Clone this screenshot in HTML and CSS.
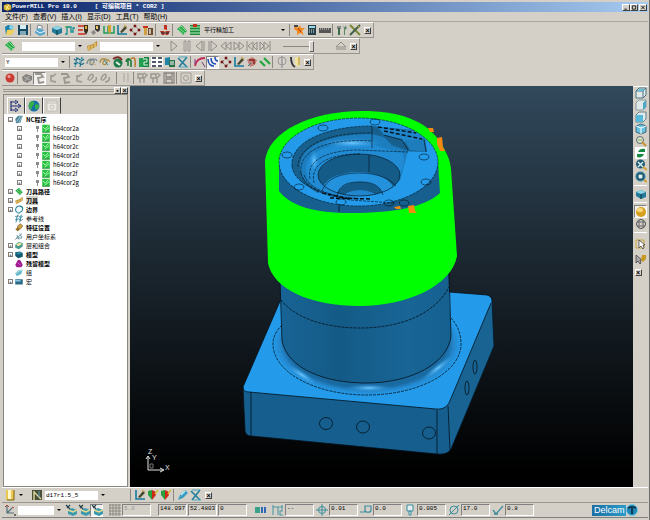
FILE: index.html
```html
<!DOCTYPE html>
<html lang="zh-CN">
<head>
    <meta charset="UTF-8">
    <meta name="viewport" content="width=device-width, initial-scale=1.0">
    <title>PowerMILL Pro 10.0</title>
    <link rel="stylesheet" href="styles.css">
</head>
<body>
    <!-- icon sprite -->
    <svg class="sprite" aria-hidden="true">
        <symbol id="open" viewBox="0 0 12 12"><path d="M1 3l3-2 5 1v8l-7 1z" fill="#1b7fa8"/><path d="M3 6l8-1-3 6-6 0z" fill="#f0d060"/><path d="M6 1l4 2-2 3-3-2z" fill="#7fd4f0"/></symbol>
        <symbol id="save" viewBox="0 0 12 12"><path d="M1 1h10v10H1z" fill="#174a62"/><path d="M3 1h6v4H3z" fill="#d8eef5"/><path d="M3 7h6v4H3z" fill="#7fa8b8"/></symbol>
        <symbol id="print" viewBox="0 0 12 12"><path d="M4 1l4 1v4l-5-1z" fill="#fff" stroke="#345" stroke-width=".6"/><path d="M1 6l5-2 5 3v3l-5 2-5-3z" fill="#5aa5cc"/><path d="M1 6l5 3 5-2" fill="none" stroke="#e8f8ff"/></symbol>
        <symbol id="block" viewBox="0 0 12 12"><path d="M1 4l5-2 5 2v5l-5 2-5-3z" fill="#267a99"/><path d="M1 4l5-2 5 2-5 2z" fill="#8fd6e6"/><path d="M6 6v5" stroke="#0b3a4d"/></symbol>
        <symbol id="rapid" viewBox="0 0 12 12"><path d="M1 10h2V3h4v5h2V4h2" fill="none" stroke="#149090" stroke-width="1.3"/><path d="M1 3h4" stroke="#2a9a4a"/></symbol>
        <symbol id="feeds" viewBox="0 0 12 12"><path d="M1 2h6M1 6h5M1 10h7" stroke="#d02818" stroke-width="1.6"/><path d="M7 1h4v6l-2 4-2-4z" fill="#3a2a1a"/><path d="M8 2h2v3H8z" fill="#e0b040"/></symbol>
        <symbol id="tool" viewBox="0 0 12 12"><path d="M5 1h5v5l-2 2-3-2z" fill="#3a3a3a"/><path d="M6 2h2v3H6z" fill="#e8c860"/><path d="M1 8l3-2 2 3-3 2z" fill="#888"/></symbol>
        <symbol id="leads" viewBox="0 0 12 12"><path d="M1 2v7h4V2M7 2v7h4V2" fill="none" stroke="#1f9c58" stroke-width="1.5"/><path d="M5 1h3v6l-1 3-2-3z" fill="#d8a030"/></symbol>
        <symbol id="axis" viewBox="0 0 12 12"><path d="M2 1v9h9" fill="none" stroke="#167aa0" stroke-width="1.6"/><path d="M4 8l5-6 2 2-5 5z" fill="#4a4a30"/><path d="M8 1l3 2" stroke="#d0a030"/></symbol>
        <symbol id="points" viewBox="0 0 12 12"><path d="M2 6l4-4 4 4-4 4z" fill="none" stroke="#555" stroke-dasharray="1 1"/><path d="M5 1h2v2H5zM1 5h2v2H1zM9 5h2v2H9zM5 9h2v2H5z" fill="#7b1515" stroke="#7b1515" stroke-width=".6"/></symbol>
        <symbol id="holder" viewBox="0 0 12 12"><path d="M1 2h5v2H1z" fill="#c83018"/><path d="M2 4h3v7H2z" fill="#d0a040"/><path d="M6 4h5v7H6z" fill="#6c4830"/><path d="M7 5h2v5H7z" fill="#c8c0a8"/></symbol>
        <symbol id="drill" viewBox="0 0 12 12"><path d="M5 1h3v5H5z" fill="#c03020"/><path d="M1 7h10l-2 4H3z" fill="#b03428"/><path d="M6 5v6" stroke="#f0e0c0"/><path d="M2 9h8" stroke="#303030"/></symbol>
        <symbol id="path" viewBox="0 0 12 12"><path d="M1 5l5-4 5 6-4 4z" fill="#27a844"/><path d="M3 4l6 5M5 2l5 5M2 6l5 4" stroke="#b8f5c4" stroke-width=".7"/></symbol>
        <symbol id="strategy" viewBox="0 0 12 12"><path d="M1 1h10v10H1z" fill="#1d8a3c"/><path d="M1 3h10M1 6h10M1 9h10" stroke="#b8f0c0"/><path d="M4 0h4v3H4z" fill="#c83020"/></symbol>
        <symbol id="logo" viewBox="0 0 12 12"><path d="M1 3l5-2 5 2v6l-5 2-5-2z" fill="#d8b030"/><path d="M3 4l5 4M8 2l-4 7" stroke="#fff4a8" stroke-width="1.3"/><path d="M1 9l5 2 5-2" fill="none" stroke="#20304a"/></symbol>
        <symbol id="star" viewBox="0 0 12 12"><path d="M2 2l3 2 2-3 1 3 4 0-3 3 2 4-4-2-3 2 0-4-3-2z" fill="#f08a20"/><path d="M1 1h4v2H1z" fill="#444"/><path d="M5 4l3 4" stroke="#a03010"/></symbol>
        <symbol id="calc" viewBox="0 0 12 12"><path d="M2 1h8v10H2z" fill="#26404a"/><path d="M3 2h6v2H3z" fill="#9ad8e8"/><path d="M3 6h6M3 8h6" stroke="#d8e8e8" stroke-dasharray="1 1"/></symbol>
        <symbol id="ruler" viewBox="0 0 12 12"><path d="M0 4h12v5H0z" fill="#555"/><path d="M1 5h10" stroke="#ddd" stroke-dasharray="1 1"/></symbol>
        <symbol id="tools" viewBox="0 0 12 12"><path d="M1 2h4v3H1z" fill="#888"/><path d="M3 4v7" stroke="#3f6a4a" stroke-width="2"/><path d="M7 1c-1 3 3 3 2 0l2 3-2 2v5H8V5z" fill="#5c8a66"/></symbol>
        <symbol id="cross" viewBox="0 0 12 12"><path d="M1 1l10 10" stroke="#7a8a30" stroke-width="2"/><path d="M11 1L1 11" stroke="#44604a" stroke-width="2"/><path d="M8 1l3 3" stroke="#d8c040"/></symbol>
        <symbol id="mill" viewBox="0 0 12 12"><path d="M1 6l6-2 4-3v5l-5 3-4 2z" fill="#c09030"/><path d="M3 6v4M6 5v4M9 3v4" stroke="#fff0b0" stroke-width=".8"/></symbol>
        <symbol id="play" viewBox="0 0 12 12"><path d="M3 1l6 5-6 5z" fill="none" stroke="#8f8c86"/></symbol>
        <symbol id="pause" viewBox="0 0 12 12"><path d="M3 1h2v10H3zM7 1h2v10H7z" fill="none" stroke="#8f8c86" stroke-width=".8"/></symbol>
        <symbol id="stepback" viewBox="0 0 12 12"><path d="M8 1L2 6l6 5zM10 1v10" fill="none" stroke="#8f8c86"/></symbol>
        <symbol id="stepfwd" viewBox="0 0 12 12"><path d="M4 1l6 5-6 5zM2 1v10" fill="none" stroke="#8f8c86"/></symbol>
        <symbol id="rewind" viewBox="0 0 12 12"><path d="M6 2L1 6l5 4zM11 2L6 6l5 4z" fill="none" stroke="#8f8c86"/></symbol>
        <symbol id="forward" viewBox="0 0 12 12"><path d="M1 2l5 4-5 4zM6 2l5 4-5 4z" fill="none" stroke="#8f8c86"/></symbol>
        <symbol id="first" viewBox="0 0 12 12"><path d="M1 1v10M7 2L2 6l5 4zM11 2L7 6l4 4z" fill="none" stroke="#8f8c86"/></symbol>
        <symbol id="last" viewBox="0 0 12 12"><path d="M11 1v10M1 2l4 4-4 4zM5 2l5 4-5 4z" fill="none" stroke="#8f8c86"/></symbol>
        <symbol id="eject" viewBox="0 0 12 12"><path d="M6 2l5 5H1zM1 9h10" fill="none" stroke="#8f8c86"/></symbol>
        <symbol id="curve" viewBox="0 0 12 12"><path d="M1 3c3 3 3-2 5 0s3 2 5 0M1 7c3 3 3-2 5 0s3 2 5 0M4 1L2 11M9 1L7 11" fill="none" stroke="#1c7088" stroke-width="1.1"/><path d="M2 10l8-8" stroke="#6cc0d0"/></symbol>
        <symbol id="swirl" viewBox="0 0 12 12"><path d="M1 8c0-6 8-6 7-2s-5 3-4 0 6-4 7-1" fill="none" stroke="#7b8c90" stroke-width="1.3"/><path d="M2 5l8 4" stroke="#c8b080"/></symbol>
        <symbol id="swirl2" viewBox="0 0 12 12"><path d="M1 7c0-6 8-5 7-1s-5 3-4 0 5-4 7 0" fill="none" stroke="#b09048" stroke-width="1.3"/><path d="M5 4l4 5" stroke="#2a90a0"/></symbol>
        <symbol id="gauge" viewBox="0 0 12 12"><circle cx="6" cy="7" r="4.500" fill="#1f7a4a"/><path d="M1 3c4-3 7-2 9 1" fill="none" stroke="#803028" stroke-width="2"/><path d="M4 6l4 3" stroke="#e0f0e0" stroke-width="2"/></symbol>
        <symbol id="arch" viewBox="0 0 12 12"><path d="M1 6c1-4 3-4 5-1l0 6M3 3v7" fill="none" stroke="#1f7a38" stroke-width="1.6"/><path d="M6 3c3-3 5-1 4 8" fill="none" stroke="#b88030" stroke-width="1.6"/></symbol>
        <symbol id="sheet" viewBox="0 0 12 12"><path d="M1 2h6v9H1z" fill="#22a050"/><path d="M6 1h5v10H6z" fill="#1a8040"/><path d="M5 3h4v3H6v3h4" stroke="#d8ffe0" fill="none"/></symbol>
        <symbol id="list" viewBox="0 0 12 12"><path d="M0 1h12v10H0z" fill="#fff"/><path d="M1 2h4M7 2h4M1 6h4M7 6h4M1 10h4M7 10h4" stroke="#1b2438" stroke-width="1.6"/></symbol>
        <symbol id="copy" viewBox="0 0 12 12"><path d="M1 2l5-1v8H1z" fill="#1f86a8"/><path d="M5 4h6v7H5z" fill="#2a7048"/><path d="M6 6h4M6 8h4" stroke="#fff"/></symbol>
        <symbol id="delete" viewBox="0 0 12 12"><path d="M1 2l9 9M10 1L2 11" stroke="#22809c" stroke-width="1.6"/><path d="M2 1h8M3 11h8" stroke="#4aa8c0"/></symbol>
        <symbol id="arc" viewBox="0 0 12 12"><path d="M1 10C2 4 6 2 11 2" fill="none" stroke="#c02858" stroke-width="1.8"/><path d="M1 3v5M8 6l3 5" stroke="#803880"/></symbol>
        <symbol id="waves" viewBox="0 0 12 12"><path d="M1 3c0 5 3 7 6 7M4 2c0 4 2 6 5 6M8 1c0 3 1 4 3 4" fill="none" stroke="#1a4ab8" stroke-width="1.5"/></symbol>
        <symbol id="redpath" viewBox="0 0 12 12"><path d="M1 4l5-3 5 3-2 5-5 2z" fill="#c08078"/><path d="M3 4h5v4" fill="none" stroke="#8a2020" stroke-width="1.4"/><path d="M2 10l3-3" stroke="#2a8080"/></symbol>
        <symbol id="hatch" viewBox="0 0 12 12"><path d="M1 5l5 5M5 2l6 6" stroke="#20a840" stroke-width="2.200"/></symbol>
        <symbol id="phi" viewBox="0 0 12 12"><circle cx="6" cy="5" r="4" fill="none" stroke="#999"/><path d="M6 0v12" stroke="#999" stroke-width="1.4"/></symbol>
        <symbol id="cutter" viewBox="0 0 12 12"><path d="M2 1c0 6 2 9 4 10" fill="none" stroke="#333" stroke-width="1.8"/><path d="M6 1h5v7l-2 3-3-3z" fill="#f0e4a0"/><path d="M10 1v8" stroke="#b08828"/></symbol>
        <symbol id="record" viewBox="0 0 12 12"><circle cx="6" cy="6" r="4.500" fill="#c83c34"/><circle cx="5" cy="4.500" r="1.500" fill="#f0a098"/></symbol>
        <symbol id="gsolid" viewBox="0 0 12 12"><path d="M1 5l4-3 6 2v4l-5 3-4-2z" fill="#858280"/><path d="M3 5l6 3M8 4L4 9" stroke="#bbb"/></symbol>
        <symbol id="gcurl" viewBox="0 0 12 12"><path d="M1 2l6 0 2 3-5 1 1 5 5-1" fill="none" stroke="#9a9790" stroke-width="1.8"/></symbol>
        <symbol id="gleft" viewBox="0 0 12 12"><path d="M9 2L4 5l0 4 5 1M3 4l4 0" fill="none" stroke="#a3a099" stroke-width="1.8"/></symbol>
        <symbol id="gloop" viewBox="0 0 12 12"><path d="M2 8c0-4 4-7 5-5s-3 6-4 5M6 10c4 0 5-3 4-5" fill="none" stroke="#9a9790" stroke-width="1.5"/></symbol>
        <symbol id="gbars" viewBox="0 0 12 12"><path d="M4 1v9M8 1v9M10 10h1" stroke="#aaa7a0"/></symbol>
        <symbol id="gtools" viewBox="0 0 12 12"><path d="M1 2h5v4H1zM7 1l3 2-3 3v5M3 6v5" fill="none" stroke="#9a9790" stroke-width="1.4"/></symbol>
        <symbol id="gsave" viewBox="0 0 12 12"><path d="M1 1h10v10H1zM3 1v4h6V1M3 11V7h6v4" fill="none" stroke="#8a8780" stroke-width="1.3"/></symbol>
        <symbol id="gview" viewBox="0 0 12 12"><path d="M1 1h10v10H1z" fill="none" stroke="#a09d96"/><circle cx="6" cy="6" r="2.500" fill="none" stroke="#a09d96"/></symbol>
        <symbol id="cubew" viewBox="0 0 12 12"><path d="M1 4l3-3h7v7l-3 3H1z" fill="#dfe9ea" stroke="#4d7380"/><path d="M1 4h7v7M8 4l3-3" fill="none" stroke="#4d7380"/><path d="M2 4l2-2h6L8 4z" fill="#65bfd8"/></symbol>
        <symbol id="cuber" viewBox="0 0 12 12"><path d="M1 4l3-3h7v7l-3 3H1z" fill="#dfe9ea" stroke="#8a9ba0"/><path d="M8 4l3-3v7l-3 3z" fill="#49a9c8"/></symbol>
        <symbol id="cubef" viewBox="0 0 12 12"><path d="M1 4l3-3h7v7l-3 3H1z" fill="#dfe9ea" stroke="#66808a"/><path d="M1 4h7v7H1z" fill="#57b9d9"/></symbol>
        <symbol id="iso" viewBox="0 0 12 12"><path d="M1 3l5-2 5 2v6l-5 2-5-2z" fill="#68c0dc" stroke="#20506a" stroke-width=".8"/><path d="M1 3l5 2 5-2M6 5v6" fill="none" stroke="#fff"/></symbol>
        <symbol id="zoom" viewBox="0 0 12 12"><circle cx="5" cy="5" r="3.500" fill="#cfe6d8" stroke="#666"/><path d="M7 7l4 4" stroke="#c89030" stroke-width="2"/><path d="M3 5h4" stroke="#a0a030"/></symbol>
        <symbol id="refresh" viewBox="0 0 12 12"><path d="M0 0h12v12H0z" fill="#fff"/><path d="M3 5c1-3 4-4 7-3v3H6zM9 7c-1 3-4 4-7 3V7h4z" fill="#168c40"/></symbol>
        <symbol id="zoomx" viewBox="0 0 12 12"><circle cx="5.500" cy="5" r="4.500" fill="#235a70"/><path d="M3 3l5 5M8 3L3 8" stroke="#d4f2fa" stroke-width="1.4"/><path d="M8 8l4 3" stroke="#d0a030" stroke-width="2"/></symbol>
        <symbol id="zoombox" viewBox="0 0 12 12"><circle cx="5.500" cy="5.500" r="5" fill="#2f7f98"/><path d="M3 3h5v5H3z" fill="#d8f4fa" stroke="#103040"/><path d="M9 9l3 2" stroke="#d0a030" stroke-width="2"/></symbol>
        <symbol id="shade" viewBox="0 0 12 12"><circle cx="6" cy="6" r="5" fill="#d8a020"/><ellipse cx="5" cy="4" rx="3" ry="2" fill="#f8dc80"/></symbol>
        <symbol id="wire" viewBox="0 0 12 12"><circle cx="6" cy="6" r="4.500" fill="none" stroke="#555"/><path d="M2 4h8M2 8h8M4 2v8M8 2v8" stroke="#666"/></symbol>
        <symbol id="select" viewBox="0 0 12 12"><path d="M1 2h8v8H1z" fill="none" stroke="#c8a840"/><path d="M4 2v8l2-2 2 3 1-1-1-3h2z" fill="#fff" stroke="#333" stroke-width=".7"/></symbol>
        <symbol id="pick" viewBox="0 0 12 12"><path d="M1 2v8l2-2 2 3 1-1-1-3h2z" fill="#aaa" stroke="#333" stroke-width=".7"/><path d="M7 2h4v4L8 9 6 7z" fill="#c89820"/></symbol>
        <symbol id="tree" viewBox="0 0 12 12"><path d="M1 1v10M1 2h5M1 6h9M1 10h5" stroke="#1c2c78" fill="none" stroke-width="1.1"/><path d="M5 0l3 2-3 2M8 4l3 2-3 2M5 8l3 2-3 2" stroke="#1c2c78" fill="none"/></symbol>
        <symbol id="globe" viewBox="0 0 12 12"><circle cx="6" cy="6" r="5.500" fill="#1670a8"/><path d="M2 2c3-2 5 0 4 2S3 7 4 10C1 9 0 5 2 2zM8 4l3 1c0 3-1 4-3 5-1-2-2-4 0-6z" fill="#38b048"/></symbol>
        <symbol id="page" viewBox="0 0 12 12"><path d="M1 1h10v10H1z" fill="#ece9e2" stroke="#c2bfb8"/><path d="M1 3h10" stroke="#c2bfb8"/><circle cx="6" cy="7" r="2" fill="none" stroke="#c2bfb8"/></symbol>
        <symbol id="nc" viewBox="0 0 12 12"><path d="M1 5l4-4h6L8 10l-6 1z" fill="#4a8096"/><path d="M3 9l5-8M6 10l4-8" stroke="#b8e0ec"/></symbol>
        <symbol id="prog" viewBox="0 0 12 12"><path d="M1 1h10v10H1z" fill="#28c040"/><path d="M2 4l3 3 4-5M4 10l6-5" fill="none" stroke="#b0ffb8" stroke-width="1.2"/><path d="M1 11h10" stroke="#107028"/></symbol>
        <symbol id="boundary" viewBox="0 0 12 12"><path d="M2 4c2-4 9-3 9 1S8 9 6 11C3 10 0 8 2 4z" fill="#eaf8fc" stroke="#2a8098" stroke-width="1.4"/></symbol>
        <symbol id="feature" viewBox="0 0 12 12"><path d="M4 4l4-3 3 3-3 4-4 0z" fill="#c8a048" stroke="#705010" stroke-width=".7"/><path d="M1 8l4-2 2 3-3 2z" fill="#8c6a20"/></symbol>
        <symbol id="plane" viewBox="0 0 12 12"><path d="M1 10L10 2M3 4l3 6M7 2l3 6M2 8h8" stroke="#6c98a4" stroke-width="1.3"/></symbol>
        <symbol id="layers" viewBox="0 0 12 12"><path d="M1 5l5-4 5 2v4l-5 4-5-2z" fill="#4a9a90"/><path d="M2 5l5-3 3 2-5 3z" fill="#f0e8a0"/></symbol>
        <symbol id="model" viewBox="0 0 12 12"><path d="M1 3l6-1 4 2v5l-6 2-4-3z" fill="#145a74"/><path d="M2 4l5-1 3 1-5 2z" fill="#2e98b8"/></symbol>
        <symbol id="stock" viewBox="0 0 12 12"><path d="M4 2l2-1 2 1 3 6-2 3H3L1 8z" fill="#a01890"/><path d="M4 5l4 3" stroke="#e080d8"/></symbol>
        <symbol id="group" viewBox="0 0 12 12"><path d="M1 7l4-4 6-1-2 6-6 3z" fill="#68b8c8"/><path d="M2 7l4-3 4-1" stroke="#d0f0f8" fill="none"/></symbol>
        <symbol id="macro" viewBox="0 0 12 12"><path d="M1 3h10v7H1z" fill="#2a6a88"/><path d="M1 4h7v2H1z" fill="#88c8e0"/></symbol>
        <symbol id="pin" viewBox="0 0 5 9"><path d="M1 2h3v3H1zM2 5h1v3H2z" fill="#8c8c8c"/></symbol>
        <symbol id="endmill" viewBox="0 0 12 12"><path d="M2 1h8v10H2z" fill="#e8c850"/><path d="M4 1h3v9H4z" fill="#fff6cc"/><path d="M10 1v10H3" fill="none" stroke="#806010"/></symbol>
        <symbol id="toolpage" viewBox="0 0 12 12"><path d="M1 1h10v10H1z" fill="#4a4f38"/><path d="M3 2v9M3 3l7 7" stroke="#e0d8a0" stroke-width="1.4"/><path d="M8 2v6" stroke="#58a0b8"/></symbol>
        <symbol id="redgreen" viewBox="0 0 12 12"><path d="M1 2l4-1v10l-4-5z" fill="#28a040"/><path d="M5 1l4 2v3l-4 5z" fill="#d02818"/><path d="M8 5l3-4" stroke="#d8c040" stroke-width="1.5"/></symbol>
        <symbol id="pen" viewBox="0 0 12 12"><path d="M1 11l2-5 5-5 3 3-5 5z" fill="#3a9cc0"/><path d="M4 6l4-4" stroke="#c0ecf8" stroke-width="1.4"/></symbol>
        <symbol id="wcs" viewBox="0 0 12 12"><path d="M3 1v8h7M3 9l5-5" fill="none" stroke="#50707c" stroke-width="1.2"/><path d="M1 3l2-2 2 2M8 3l2 1" stroke="#b04038" fill="none"/><path d="M10 11h2" stroke="#000"/></symbol>
        <symbol id="wplane" viewBox="0 0 12 12"><path d="M3 6l4-2 5 2v4l-4 2-5-2z" fill="#3a9ab0"/><path d="M3 6l5 2 4-2" stroke="#e8d890" stroke-width="1.5" fill="none"/><path d="M1 1l4 4M5 1L2 4" stroke="#28404a" stroke-width="1.2"/></symbol>
        <symbol id="grid" viewBox="0 0 12 12"><path d="M1 0v12M4 0v12M7 0v12M10 0v12M0 1h12M0 4h12M0 7h12M0 10h12" stroke="#8a8880"/></symbol>
        <symbol id="cubes" viewBox="0 0 12 12"><path d="M1 3h5v6H1z" fill="#3aa088"/><path d="M7 3h2v6H7zM10 3h2v6h-2z" fill="#2a68b8"/></symbol>
        <symbol id="thick" viewBox="0 0 12 12"><path d="M1 1v10M1 3h10M6 3v8M10 1v6H8v4h3" fill="none" stroke="#4f98a4" stroke-width="1.1"/></symbol>
        <symbol id="target" viewBox="0 0 12 12"><circle cx="6" cy="6" r="3.500" fill="none" stroke="#3d8d9c"/><path d="M6 0v12M0 6h12" stroke="#3d8d9c"/></symbol>
        <symbol id="offset" viewBox="0 0 12 12"><path d="M0 8h5V2h6v4c0 3-6 3-6 0" fill="none" stroke="#3d8d9c" stroke-width="1.2"/></symbol>
        <symbol id="cuttip" viewBox="0 0 12 12"><path d="M3 1h6v6H3zM5 7h2v4H5z" fill="#e4eeee" stroke="#3d8d9c"/></symbol>
        <symbol id="diam" viewBox="0 0 12 12"><circle cx="6" cy="6" r="4" fill="none" stroke="#3d8d9c"/><path d="M1 11L11 1" stroke="#3d8d9c"/></symbol>
        <symbol id="tick" viewBox="0 0 12 12"><path d="M1 6l3 4 7-8M2 10h4" fill="none" stroke="#3d8d9c" stroke-width="1.3"/></symbol>
    </svg>

    <div class="window">
        <header class="titlebar">
            <svg class="logo"><use href="#logo"/></svg>
            <h1>PowerMILL Pro 10.0     [ 可编辑项目 * COR2 ]</h1>
            <button class="winbtn" aria-label="最小化"><svg viewBox="0 0 6 6"><path d="M1 5h3" stroke="#000"/></svg></button>
            <button class="winbtn" aria-label="最大化"><svg viewBox="0 0 6 6"><path d="M1 1h4v4H1z" fill="none" stroke="#000"/></svg></button>
            <button class="winbtn apart" aria-label="关闭"><svg viewBox="0 0 6 6"><path d="M1 1l4 4M5 1L1 5" stroke="#000"/></svg></button>
        </header>

        <nav class="menu">
            <a href="#">文件(F)</a>
            <a href="#">查看(V)</a>
            <a href="#">插入(I)</a>
            <a href="#">显示(D)</a>
            <a href="#">工具(T)</a>
            <a href="#">帮助(H)</a>
        </nav>

        <div class="bars">
            <div class="bar">
                <button aria-label="打开"><svg><use href="#open"/></svg></button>
                <button aria-label="保存"><svg><use href="#save"/></svg></button>
                <i class="sep"></i>
                <button aria-label="打印"><svg><use href="#print"/></svg></button>
                <i class="sep"></i>
                <button aria-label="毛坯"><svg><use href="#block"/></svg></button>
                <button aria-label="快进高度"><svg><use href="#rapid"/></svg></button>
                <button aria-label="进给率"><svg><use href="#feeds"/></svg></button>
                <button aria-label="开始点"><svg><use href="#tool"/></svg></button>
                <button aria-label="切入切出"><svg><use href="#leads"/></svg></button>
                <button aria-label="刀轴"><svg><use href="#axis"/></svg></button>
                <button aria-label="点分布"><svg><use href="#points"/></svg></button>
                <button aria-label="刀柄"><svg><use href="#holder"/></svg></button>
                <i class="sep"></i>
                <button aria-label="碰撞检查"><svg><use href="#drill"/></svg></button>
                <i class="sep"></i>
                <button aria-label="刀具路径"><svg><use href="#path"/></svg></button>
                <button aria-label="策略"><svg><use href="#strategy"/></svg></button>
                <span class="combo flat"><select aria-label="加工策略"><option>平行精加工</option></select></span>
                <i class="sep"></i>
                <button aria-label="仿真"><svg><use href="#star"/></svg></button>
                <button aria-label="计算器"><svg><use href="#calc"/></svg></button>
                <button aria-label="测量"><svg><use href="#ruler"/></svg></button>
                <i class="sep"></i>
                <button aria-label="刀具库"><svg><use href="#tools"/></svg></button>
                <button aria-label="选项"><svg><use href="#cross"/></svg></button>
                <button class="close" aria-label="关闭工具栏">×</button>
            </div>

            <div class="bar">
                <button aria-label="刀具路径"><svg><use href="#path"/></svg></button>
                <i class="gap"></i>
                <span class="combo"><select aria-label="仿真路径"><option></option></select></span>
                <button aria-label="刀具"><svg><use href="#mill"/></svg></button>
                <span class="combo"><select aria-label="仿真刀具"><option></option></select></span>
                <i class="gap"></i>
                <button aria-label="播放"><svg><use href="#play"/></svg></button>
                <button aria-label="暂停"><svg><use href="#pause"/></svg></button>
                <button aria-label="后退一步"><svg><use href="#stepback"/></svg></button>
                <button aria-label="前进一步"><svg><use href="#stepfwd"/></svg></button>
                <button aria-label="快退"><svg><use href="#rewind"/></svg></button>
                <button aria-label="快进"><svg><use href="#forward"/></svg></button>
                <button aria-label="开头"><svg><use href="#first"/></svg></button>
                <button aria-label="末尾"><svg><use href="#last"/></svg></button>
                <input class="speed" type="range" min="0" max="100" value="100" aria-label="速度">
                <button aria-label="退出"><svg><use href="#eject"/></svg></button>
                <button class="close" aria-label="关闭工具栏">×</button>
            </div>

            <div class="bar">
                <span class="combo"><select aria-label="参考线"><option>Y</option></select></span>
                <i class="sep"></i>
                <button aria-label="曲线"><svg><use href="#curve"/></svg></button>
                <button aria-label="螺旋"><svg><use href="#swirl"/></svg></button>
                <button aria-label="编辑螺旋"><svg><use href="#swirl2"/></svg></button>
                <button aria-label="计时"><svg><use href="#gauge"/></svg></button>
                <button aria-label="连接"><svg><use href="#arch"/></svg></button>
                <button aria-label="报表"><svg><use href="#sheet"/></svg></button>
                <button aria-label="列表"><svg><use href="#list"/></svg></button>
                <button aria-label="复制"><svg><use href="#copy"/></svg></button>
                <button aria-label="删除"><svg><use href="#delete"/></svg></button>
                <i class="sep"></i>
                <button aria-label="圆弧"><svg><use href="#arc"/></svg></button>
                <button class="on" aria-label="显示路径"><svg><use href="#waves"/></svg></button>
                <button aria-label="显示点"><svg><use href="#points"/></svg></button>
                <button aria-label="显示刀轴"><svg><use href="#axis"/></svg></button>
                <button aria-label="显示进给"><svg><use href="#redpath"/></svg></button>
                <button aria-label="显示行距"><svg><use href="#hatch"/></svg></button>
                <i class="sep"></i>
                <button aria-label="直径"><svg><use href="#phi"/></svg></button>
                <button aria-label="刀刃"><svg><use href="#cutter"/></svg></button>
                <button class="close" aria-label="关闭工具栏">×</button>
            </div>

            <div class="bar">
                <button aria-label="录制"><svg><use href="#record"/></svg></button>
                <i class="sep"></i>
                <button aria-label="实体"><svg><use href="#gsolid"/></svg></button>
                <button class="on" aria-label="彩虹"><svg><use href="#gcurl"/></svg></button>
                <button aria-label="向左"><svg><use href="#gleft"/></svg></button>
                <button aria-label="回卷"><svg><use href="#gcurl"/></svg></button>
                <button aria-label="折返"><svg><use href="#gleft"/></svg></button>
                <button aria-label="旋转"><svg><use href="#gloop"/></svg></button>
                <button aria-label="环绕"><svg><use href="#gloop"/></svg></button>
                <i class="gap"></i>
                <i class="sep"></i>
                <button aria-label="分栏"><svg><use href="#gbars"/></svg></button>
                <i class="sep"></i>
                <button aria-label="载入刀具"><svg><use href="#gtools"/></svg></button>
                <button aria-label="卸载刀具"><svg><use href="#gtools"/></svg></button>
                <button aria-label="保存毛坯"><svg><use href="#gsave"/></svg></button>
                <i class="sep"></i>
                <button aria-label="视图"><svg><use href="#gview"/></svg></button>
                <button class="close" aria-label="关闭工具栏">×</button>
            </div>
        </div>

        <main>
            <aside class="explorer">
                <div class="grip">
                    <i></i>
                    <button class="close" aria-label="停靠">▪</button>
                    <button class="close" aria-label="关闭">×</button>
                </div>
                <div class="tabs">
                    <button class="current" aria-label="浏览器"><svg><use href="#tree"/></svg></button>
                    <button aria-label="网络"><svg><use href="#globe"/></svg></button>
                    <button aria-label="页面"><svg><use href="#page"/></svg></button>
                </div>
                <ul class="tree">
                    <li><button class="twisty">−</button><svg><use href="#nc"/></svg><b>NC程序</b></li>
                    <li class="child"><button class="twisty">+</button><svg class="pin"><use href="#pin"/></svg><svg><use href="#prog"/></svg>h64cor2a</li>
                    <li class="child"><button class="twisty">+</button><svg class="pin"><use href="#pin"/></svg><svg><use href="#prog"/></svg>h64cor2b</li>
                    <li class="child"><button class="twisty">+</button><svg class="pin"><use href="#pin"/></svg><svg><use href="#prog"/></svg>h64cor2c</li>
                    <li class="child"><button class="twisty">+</button><svg class="pin"><use href="#pin"/></svg><svg><use href="#prog"/></svg>h64cor2d</li>
                    <li class="child"><button class="twisty">+</button><svg class="pin"><use href="#pin"/></svg><svg><use href="#prog"/></svg>h64cor2e</li>
                    <li class="child"><button class="twisty">+</button><svg class="pin"><use href="#pin"/></svg><svg><use href="#prog"/></svg>h64cor2f</li>
                    <li class="child"><button class="twisty">+</button><svg class="pin"><use href="#pin"/></svg><svg><use href="#prog"/></svg>h64cor2g</li>
                    <li><button class="twisty">+</button><svg><use href="#path"/></svg><b>刀具路径</b></li>
                    <li><button class="twisty">+</button><svg><use href="#mill"/></svg><b class="selected">刀具</b></li>
                    <li><button class="twisty">+</button><svg><use href="#boundary"/></svg><b>边界</b></li>
                    <li class="leaf"><svg><use href="#curve"/></svg>参考线</li>
                    <li class="leaf"><svg><use href="#feature"/></svg><b>特征设置</b></li>
                    <li class="leaf"><svg><use href="#plane"/></svg>用户坐标系</li>
                    <li><button class="twisty">+</button><svg><use href="#layers"/></svg>层和组合</li>
                    <li><button class="twisty">+</button><svg><use href="#model"/></svg><b>模型</b></li>
                    <li class="leaf"><svg><use href="#stock"/></svg><b>残留模型</b></li>
                    <li class="leaf"><svg><use href="#group"/></svg>组</li>
                    <li><button class="twisty">+</button><svg><use href="#macro"/></svg>宏</li>
                </ul>
            </aside>

            <section class="view">
                <svg viewBox="130 85 503 401" role="img" aria-label="三维模型">
                    <defs>
                        <linearGradient id="cyl">
                            <stop offset="0" stop-color="#186496"/>
                            <stop offset=".35" stop-color="#145a86"/>
                            <stop offset=".75" stop-color="#186596"/>
                            <stop offset="1" stop-color="#15608f"/>
                        </linearGradient>
                        <radialGradient id="fillet">
                            <stop offset=".86" stop-color="#1a6aa2"/>
                            <stop offset=".93" stop-color="#2589d0"/>
                            <stop offset="1" stop-color="#239bea"/>
                        </radialGradient>
                        <radialGradient id="shine">
                            <stop offset="0" stop-color="#6cc8ff"/>
                            <stop offset="1" stop-color="#2491dc" stop-opacity="0"/>
                        </radialGradient>
                        <clipPath id="bore"><ellipse cx="359" cy="174" rx="41" ry="21"/></clipPath>
                        <clipPath id="face"><ellipse cx="358.500" cy="161" rx="79.500" ry="44"/></clipPath>
                    </defs>

                    <!-- base plate -->
                    <path d="M243 388L245 430Q246 435 251 435L437 453Q448 454 451 448L494 345L492 298L440 300Z" fill="#155e8e"/>
                    <path d="M446 406L492 298L494 345L451 448Z" fill="#186392"/>
                    <path d="M281 298L243 386Q243 391 249 391L436 408Q445 409 449 402L491 302Q493 296 487 294L449 291Z" fill="#239bea"/>
                    <g class="edge">
                        <path d="M281 298L243 386L245 430Q246 435 251 435L437 453Q448 454 451 448L494 345L492 298Q492 295 487 294L449 291"/>
                        <path d="M243 386Q243 391 249 391L436 408Q445 409 449 402L491 302M251 391V435M437 409V453M448 405L450 449"/>
                        <ellipse cx="326" cy="422.500" rx="6.500" ry="6"/>
                        <ellipse cx="363" cy="426" rx="6.500" ry="6"/>
                        <ellipse cx="429" cy="432" rx="6.500" ry="6"/>
                        <ellipse cx="475" cy="366" rx="2" ry="7"/>
                        <ellipse cx="467" cy="387" rx="2" ry="7"/>
                    </g>

                    <!-- fillet and column -->
                    <ellipse cx="367" cy="343" rx="94" ry="51" fill="url(#fillet)"/>
                    <ellipse cx="302" cy="374" rx="18" ry="4" fill="url(#shine)" transform="rotate(34 302 374)"/>
                    <ellipse cx="369" cy="387" rx="24" ry="4" fill="url(#shine)"/>
                    <ellipse cx="438" cy="367" rx="20" ry="4" fill="url(#shine)" transform="rotate(-38 438 367)"/>
                    <path class="edge dash" d="M282 324C276 330 273 336 273 343A94 51 0 0 0 461 343C461 333 458 325 451 317"/>
                    <path d="M280 270L282 340C288 368 325 382 366 382C412 382 448 362 451 335L448 265Z" fill="url(#cyl)"/>
                    <path class="edge" d="M280 280L282 340C288 368 325 382 366 382C412 382 448 362 451 335L449 270"/>
                    <path class="edge dash" d="M281 299C295 317 325 327 360 327C405 327 437 310 449 286"/>

                    <!-- stock -->
                    <path d="M265 160C268 131 310 110 362 110C400 110 425 120 438 138C446 150 450 158 451 168L457 255C452 284 408 305 360 305C310 305 273 288 268 262Z" fill="#00ff00"/>

                    <!-- top face -->
                    <path d="M279 161L279 190C290 205 315 212 350 212C395 212 425 206 440 192L438 161Z" fill="#165f8e"/>
                    <path class="edge" d="M339 205V211"/>
                    <ellipse cx="358.500" cy="161" rx="79.500" ry="44" fill="#239bea"/>
                    <g clip-path="url(#face)">
                        <path d="M292 165C290 140 328 125 372 125L412 129L425 138L427 151L400 150L360 170L318 192C303 183 293 176 292 165Z" fill="#175f8d"/>
                        <path d="M300 168C298 144 330 133 372 133L384 136L392 144L408 150L400 180L345 198C318 192 302 182 300 168Z" fill="#1c7dbf"/>
                        <path d="M306 170C304 148 335 140 370 143L403 152C408 170 395 192 345 197C318 192 307 184 306 170Z" fill="#218bd4"/>
                        <ellipse cx="352" cy="142" rx="32" ry="5" fill="url(#shine)"/>
                        <ellipse cx="314" cy="160" rx="5" ry="12" fill="url(#shine)"/>
                        <path d="M378 126L414 130L424 138L407 142L384 134Z" fill="#2086cc"/>
                        <path d="M384 134L402 138L407 149L392 144Z" fill="#175f8d"/>
                        <path d="M404 139L424 139L426 151L410 149Z" fill="#1d7cbc"/>
                    </g>
                    <ellipse cx="359" cy="174" rx="41" ry="21" fill="#155b88"/>
                    <g clip-path="url(#bore)">
                        <ellipse cx="358" cy="190" rx="36" ry="19" fill="#2391dc"/>
                        <ellipse cx="360" cy="195" rx="23" ry="14" fill="#155b88"/>
                        <ellipse cx="360" cy="198" rx="18" ry="9" fill="#2286cc"/>
                    </g>
                    <g class="edge fine">
                        <ellipse class="dash" cx="358.500" cy="161" rx="79.500" ry="44"/>
                        <ellipse cx="359" cy="174" rx="41" ry="21"/>
                        <path class="dash" d="M292 165C290 140 328 125 372 125M292 165C293 176 303 184 322 191L350 199L395 202"/>
                        <path class="dash" d="M298 166C298 144 330 131 372 132M301 172C298 148 330 137 372 140"/>
                        <path class="dash" d="M310 178C306 160 325 150 356 149L408 151M314 182C310 165 325 153 360 153M301 172C305 190 330 196 350 198M304 174C310 190 335 196 362 198"/>
                        <path d="M372 125V147M369 154V171M384 134L402 139L408 149M424 139L426 151"/>
                        <path d="M322 190C328 175 345 172 360 172C378 172 390 178 396 185M337 195C339 183 349 181 360 181C372 181 380 184 383 194"/>
                        <path class="teeth" d="M378 126L416 132M384 130L422 138M322 192L350 198M330 197L372 198"/>
                        <ellipse cx="375" cy="121" rx="5" ry="3"/>
                        <ellipse cx="323" cy="127" rx="5" ry="3"/>
                        <ellipse cx="287" cy="154" rx="5" ry="3"/>
                        <ellipse cx="299" cy="186" rx="5" ry="3"/>
                        <ellipse cx="341" cy="201" rx="5" ry="3"/>
                        <ellipse cx="389" cy="202" rx="5" ry="3"/>
                        <ellipse cx="404" cy="202" rx="5" ry="3"/>
                        <ellipse cx="426" cy="181" rx="5" ry="3"/>
                        <ellipse cx="424" cy="156" rx="5" ry="3"/>
                    </g>
                    <path d="M428 127l5 0 1 4-4 0zM437 137l5-1 1 10 2 4-5 0-3-7zM394 206l6-1 1 3-5 0zM408 205l6-1 1 6 2 2-8 0z" fill="#f58a10"/>

                    <!-- world axes -->
                    <path d="M148 456V469H163M146 458l2-3 2 3M160 467l4 2-4 2" fill="none" stroke="#e4e4e4"/>
                    <path d="M150 463h3v4h-3z" fill="none" stroke="#777"/>
                    <g class="axis">
                        <text x="165" y="469">X</text>
                        <text x="152" y="459">Y</text>
                        <text x="148" y="453">Z</text>
                    </g>
                </svg>
            </section>

            <div class="side">
                <button aria-label="俯视"><svg><use href="#cubew"/></svg></button>
                <button aria-label="右视"><svg><use href="#cuber"/></svg></button>
                <button aria-label="前视"><svg><use href="#cubef"/></svg></button>
                <button aria-label="等轴视图"><svg><use href="#iso"/></svg></button>
                <button aria-label="缩放"><svg><use href="#zoom"/></svg></button>
                <button aria-label="刷新"><svg><use href="#refresh"/></svg></button>
                <button aria-label="全部显示"><svg><use href="#zoomx"/></svg></button>
                <button aria-label="框选缩放"><svg><use href="#zoombox"/></svg></button>
                <i class="rule"></i>
                <button aria-label="毛坯"><svg><use href="#block"/></svg></button>
                <i class="rule"></i>
                <button class="on" aria-label="阴影"><svg><use href="#shade"/></svg></button>
                <button aria-label="线框"><svg><use href="#wire"/></svg></button>
                <i class="rule"></i>
                <button class="low" aria-label="选择"><svg><use href="#select"/></svg></button>
                <button aria-label="拾取"><svg><use href="#pick"/></svg></button>
                <button class="close" aria-label="关闭工具栏">×</button>
            </div>
        </main>

        <div class="bar wide">
            <button aria-label="新建刀具"><svg><use href="#endmill"/></svg></button>
            <i class="arrow"></i>
            <i class="gap"></i>
            <button aria-label="刀具"><svg><use href="#toolpage"/></svg></button>
            <span class="combo"><select aria-label="当前刀具"><option>d17r1.5_5</option></select></span>
            <i class="space"></i>
            <i class="sep"></i>
            <button aria-label="刀具坐标"><svg><use href="#axis"/></svg></button>
            <button aria-label="刀具碰撞"><svg><use href="#redgreen"/></svg></button>
            <button aria-label="刀具过切"><svg><use href="#redgreen"/></svg></button>
            <i class="sep"></i>
            <button aria-label="编辑"><svg><use href="#pen"/></svg></button>
            <button aria-label="删除"><svg><use href="#delete"/></svg></button>
            <button class="close" aria-label="关闭工具栏">×</button>
        </div>

        <footer class="status">
            <button aria-label="坐标系"><svg><use href="#wcs"/></svg></button>
            <span class="combo short"><select aria-label="用户坐标系"><option></option></select></span>
            <button aria-label="XY平面"><svg><use href="#wplane"/></svg></button>
            <button aria-label="YZ平面"><svg><use href="#wplane"/></svg></button>
            <button class="on" aria-label="ZX平面"><svg><use href="#wplane"/></svg></button>
            <label class="first"><svg><use href="#grid"/></svg><input value="5.0" aria-label="栅格" disabled></label>
            <input value="148.097" aria-label="X" class="coord">
            <input value="52.4803" aria-label="Y">
            <input value="0" aria-label="Z">
            <label class="first"><svg><use href="#cubes"/></svg></label>
            <label class="first"><svg><use href="#thick"/></svg><input value="--" aria-label="厚度"></label>
            <label><svg><use href="#target"/></svg><input value="0.01" aria-label="公差"></label>
            <label><svg><use href="#offset"/></svg><input value="0.0" aria-label="余量"></label>
            <label><svg><use href="#cuttip"/></svg><input value="0.005" aria-label="行距"></label>
            <label><svg><use href="#diam"/></svg><input value="17.0" aria-label="直径"></label>
            <label><svg><use href="#tick"/></svg><input value="0.8" aria-label="刀尖半径"></label>
            <span class="brand">Delcam<svg viewBox="0 0 12 12"><circle cx="6" cy="6" r="5.500" fill="#1d86b4" stroke="#75c4e0"/><path d="M2 4q4-2 8 0M6 4v6" stroke="#0c2c40" stroke-width="1.6" fill="none"/></svg></span>
        </footer>
    </div>
</body>
</html>
```
FILE: styles.css
```css
* {
    box-sizing: border-box;
}
body {
    margin: 0;
    background-color: #d4d0c8;
    font-family: "Liberation Sans", "Noto Sans CJK SC", sans-serif;
    font-size: 6px;
    color: #000;
}
button,
select,
input {
    font: inherit;
    color: inherit;
    margin: 0;
    padding: 0;
    border: 0;
    background: none;
    border-radius: 0;
}
select,
input {
    font-family: "Liberation Mono", "Noto Sans CJK SC", monospace;
}
.sprite {
    display: none;
}
.window {
    min-height: 100vh;
    display: flex;
    flex-direction: column;
    padding: 2px 1px 2px 2px;
    border-right: 1px solid #6f6d68;
}

/* title and menu */
.titlebar {
    display: flex;
    align-items: center;
    height: 10px;
    padding: 0 1px;
    background: linear-gradient(to right, #0a246a, #a6caf0);
    color: #fff;
}
.titlebar .logo {
    width: 9px;
    height: 9px;
}
.titlebar h1 {
    flex: 1;
    margin: 0;
    font-family: "Liberation Mono", "Noto Sans CJK SC", monospace;
    font-size: 6px;
    line-height: 10px;
    white-space: pre;
}
.winbtn {
    display: flex;
    width: 8px;
    height: 7px;
    background-color: #d4d0c8;
    border: 1px solid;
    border-color: #fff #404040 #404040 #fff;
}
.winbtn.apart {
    margin-left: 1px;
}
.winbtn svg {
    width: 6px;
    height: 5px;
}
.menu {
    display: flex;
    gap: 5px;
    height: 10px;
    padding: 0 3px;
    border-bottom: 1px solid #aaa69e;
}
.menu a {
    font-size: 7px;
    line-height: 9px;
    color: #000;
    text-decoration: none;
    white-space: nowrap;
}

/* toolbars */
.bars {
    display: flex;
    flex-direction: column;
    align-items: flex-start;
}
.bar {
    display: flex;
    align-items: center;
    height: 16px;
    padding: 0 2px 0 1px;
    border: 1px solid;
    border-color: #fff #99968f #99968f transparent;
    border-left: 0;
}
.bar button,
.side button,
.status button {
    display: flex;
    align-items: center;
    justify-content: center;
    width: 13px;
    height: 13px;
}
.bar svg,
.side svg,
.status svg {
    flex: none;
    width: 12px;
    height: 12px;
}
.bar button.on,
.side button.on,
.status button.on {
    background-color: #f2f0ec;
    border: 1px solid;
    border-color: #808080 #fff #fff #808080;
}
.bar .close,
.side .close,
.grip .close {
    width: 7px;
    height: 7px;
    margin-left: 3px;
    background-color: #d4d0c8;
    border: 1px solid;
    border-color: #fff #404040 #404040 #fff;
    font-size: 7px;
    font-weight: bold;
    line-height: 5px;
}
.sep {
    width: 1px;
    height: 12px;
    margin: 0 2px 0 1px;
    background-color: #8a8780;
}
.gap {
    width: 4px;
}
.space {
    width: 21px;
}
.combo {
    display: flex;
    align-items: center;
    width: 65px;
    padding-left: 2px;
}
.combo select {
    appearance: none;
    flex: 1;
    min-width: 0;
    height: 9px;
    padding: 0 1px;
    background-color: #fff;
    line-height: 9px;
}
.combo::after,
.arrow {
    content: "";
    margin: 0 3px;
    border: 2px solid transparent;
    border-top-color: #000;
    border-bottom: 0;
}
.combo.flat {
    width: 87px;
}
.combo.flat select {
    background-color: transparent;
}
.combo.short {
    width: 48px;
}
.speed {
    appearance: none;
    width: 31px;
    height: 11px;
    margin: 0 20px 0 12px;
    background: linear-gradient(#8a8780, #8a8780) center / 100% 1px no-repeat;
}
.speed::-webkit-slider-thumb {
    appearance: none;
    width: 5px;
    height: 11px;
    background-color: #d4d0c8;
    border: 1px solid;
    border-color: #fff #606060 #606060 #fff;
}

/* middle part */
main {
    flex: 1;
    display: flex;
}
.explorer {
    width: 125px;
    margin: 0 2px 0 1px;
    display: flex;
    flex-direction: column;
}
.grip {
    display: flex;
    align-items: center;
    height: 8px;
}
.grip i {
    flex: 1;
    height: 3px;
    border: 1px solid #99968f;
    border-left: 0;
    border-right: 0;
}
.grip .close {
    margin-left: 0;
}
.tabs {
    display: flex;
    height: 20px;
    padding: 2px 0 0 3px;
    border: 1px solid #8a8780;
    border-bottom: 0;
}
.tabs button {
    display: flex;
    align-items: center;
    justify-content: center;
    width: 18px;
    border: 1px solid;
    border-color: #fff #404040 transparent #fff;
}
.tabs svg {
    width: 12px;
    height: 12px;
}
.tree {
    flex: 1;
    margin: 0;
    padding: 1px 4px;
    list-style: none;
    background-color: #fff;
    border: 1px solid #8a8780;
    border-top: 0;
    font-family: "Noto Sans CJK SC", sans-serif;
}
.tree li {
    display: flex;
    align-items: center;
    height: 9px;
    line-height: 9px;
}
.tree svg {
    width: 10px;
    height: 9px;
    margin: 0 2px 0 1px;
}
.tree .leaf {
    padding-left: 5px;
}
.tree .child {
    padding-left: 9px;
}
.tree .pin {
    width: 5px;
    margin: 0 0 0 13px;
}
.twisty {
    width: 5px;
    height: 5px;
    border: 1px solid #808080;
    font-size: 5px;
    line-height: 3px;
}
.selected {
    background-color: #d4d0c8;
}
.view {
    flex: 1;
    min-width: 0;
    display: flex;
    background: linear-gradient(#31495c, #18222a 50%, #000 96%);
}
.view svg {
    width: 100%;
}
.edge {
    fill: none;
    stroke: #04121c;
    stroke-width: .8;
}
.fine {
    stroke-width: .6;
}
.dash {
    fill: none;
    stroke-dasharray: 3 1;
}
.teeth {
    stroke-width: 1.5;
    stroke-dasharray: 4 2;
}
.axis {
    fill: #e4e4e4;
    font-size: 7px;
}
.side {
    display: flex;
    flex-direction: column;
    align-items: center;
    width: 15px;
    border-top: 1px solid #fff;
}
.side button {
    height: 12px;
}
.side .on {
    height: 13px;
}
.side .low {
    margin-top: 3px;
    margin-bottom: 3px;
}
.side .close {
    height: 7px;
    margin: 4px 5px 0 0;
}
.rule {
    width: 13px;
    height: 1px;
    margin: 2px 0;
    background-color: #fff;
}

/* bottom bars */
.bar.wide {
    border-right: 0;
}
.status {
    display: flex;
    align-items: center;
    height: 15px;
    padding: 0 10px 0 1px;
    border-bottom: 1px solid #808080;
}
.status label {
    display: flex;
    align-items: center;
    gap: 1px;
    margin-left: 1px;
}
.status .first {
    margin-left: 6px;
}
.status input {
    width: 29px;
    height: 12px;
    margin-right: 1px;
    padding: 0 1px 3px;
    border: 1px solid;
    border-color: #808080 #fff #fff #808080;
}
.status input:disabled {
    color: #9a9790;
}
.status .coord {
    margin-left: 6px;
}
.brand {
    display: flex;
    align-items: center;
    justify-content: space-between;
    width: 46px;
    height: 11px;
    margin-left: auto;
    padding-left: 2px;
    background: linear-gradient(to right, #1c6fa4, #2c9cc8 75%, transparent 75%);
    color: #fff;
    font-size: 9px;
}
```
